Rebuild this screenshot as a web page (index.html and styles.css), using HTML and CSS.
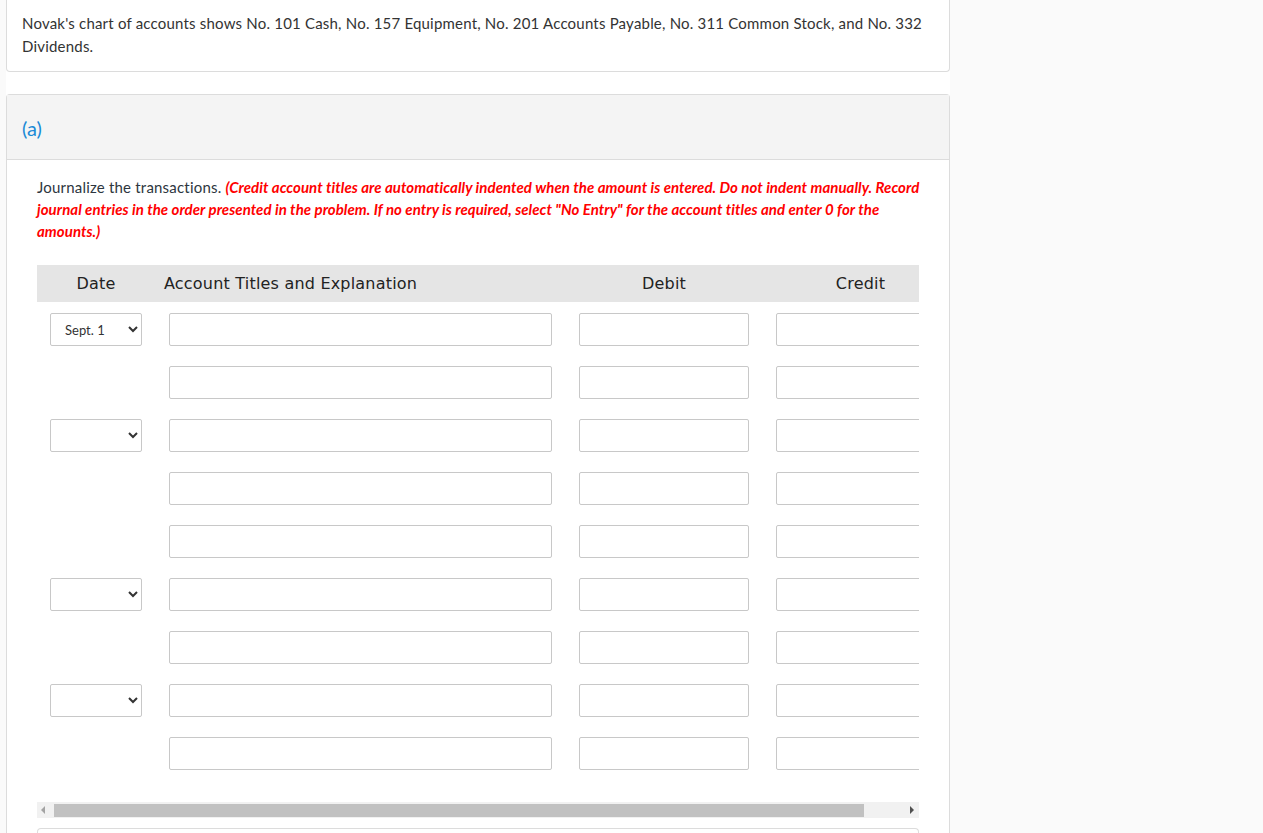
FILE: index.html
```html
<!DOCTYPE html>
<html lang="en">
<head>
    <meta charset="UTF-8">
    <title>Journal Entries</title>
    <link rel="stylesheet" href="styles.css">
</head>
<body>
    <div class="page">
        <!-- Problem statement -->
        <div class="card intro">
            Novak's chart of accounts shows No. 101 Cash, No. 157 Equipment, No. 201 Accounts Payable, No. 311 Common Stock, and No. 332 Dividends.
        </div>

        <!-- Part (a) -->
        <div class="card part">
            <div class="part-head">(a)</div>
            <div class="part-body">
                <p class="instructions">Journalize the transactions. <em class="note">(Credit account titles are automatically indented when the amount is entered. Do not indent manually. Record journal entries in the order presented in the problem. If no entry is required, select "No Entry" for the account titles and enter 0 for the amounts.)</em></p>

                <div class="table-wrap">
                    <div class="journal">
                        <div class="row head">
                            <div class="cell date">Date</div>
                            <div class="cell account">Account Titles and Explanation</div>
                            <div class="cell amount">Debit</div>
                            <div class="cell amount">Credit</div>
                        </div>
                        <div id="rows"></div>
                    </div>
                </div>

                <!-- Horizontal scrollbar -->
                <div class="scrollbar">
                    <span class="arrow left"></span>
                    <div class="thumb"></div>
                    <span class="arrow right"></span>
                </div>

                <div class="next-card"></div>
            </div>
        </div>
    </div>

    <script>
        // Filas del asiento: las que tienen objeto llevan selector de fecha
        const filas = [
            { fecha: "Sept. 1" }, null,
            { fecha: "" }, null, null,
            { fecha: "" }, null,
            { fecha: "" }, null
        ];
        const contenedor = document.getElementById('rows');

        filas.forEach(function(fila) {
            const row = document.createElement('div');
            row.className = 'row';

            let fechaHtml = '';
            if (fila) {
                fechaHtml = '<select class="date-select"><option>' + fila.fecha + '</option></select>';
            }

            row.innerHTML =
                '<div class="cell date">' + fechaHtml + '</div>' +
                '<div class="cell account"><input type="text" class="field wide"></div>' +
                '<div class="cell amount"><input type="text" class="field"></div>' +
                '<div class="cell amount"><input type="text" class="field"></div>';
            contenedor.appendChild(row);
        });
    </script>
</body>
</html>
```

FILE: styles.css
```css
body {
    margin: 0;
    background-color: #fafafa;
    font-family: 'Lato', 'Open Sans', sans-serif;
    color: #333;
}
.page {
    width: 944px;
    margin-left: 6px;
    background-color: #fff;
    min-height: 833px;
}
.card {
    border: 1px solid #dcdcdc;
    border-radius: 4px;
}
.intro {
    border-top: none;
    border-radius: 0 0 4px 4px;
    padding: 12px 15px 13px;
    font-size: 15px;
    line-height: 23px;
    letter-spacing: 0.2px;
}
.part {
    margin-top: 22px;
    border-bottom: none;
}
.part-head {
    height: 64px;
    background-color: #f4f4f4;
    border-bottom: 1px solid #dcdcdc;
    padding-left: 15px;
    line-height: 66px;
    font-size: 20px;
    color: #1a8ad6;
}
.part-body {
    padding: 16px 29px 40px 30px;
}
.instructions {
    margin: 0;
    font-size: 15px;
    line-height: 22px;
    color: #2d3640;
    letter-spacing: 0.2px;
}
.note {
    color: #ff0000;
    font-weight: bold;
    letter-spacing: 0.05px;
}

/* Tabla del asiento */
.table-wrap {
    margin-top: 23px;
    width: 882px;
    overflow: hidden;
}
.journal {
    width: 922px;
}
.row {
    display: grid;
    grid-template-columns: 118px 411px 196px 197px;
    padding: 11px 0 9px;
}
.cell.date {
    padding-left: 13px;
    text-align: center;
    height: 33px;
}
.cell.account {
    padding-left: 14px;
}
.cell.amount {
    padding-left: 13px;
}
.cell.amount + .cell.amount {
    padding-left: 14px;
}

/* Cabecera */
.row.head {
    background-color: #e5e5e5;
    height: 37px;
    padding: 0;
    align-items: center;
    font-family: 'DejaVu Sans', Verdana, sans-serif;
    font-size: 16px;
    letter-spacing: 0.2px;
    color: #222;
    width: 882px;
}
.row.head .cell {
    height: auto;
    padding-left: 0;
}
.row.head .cell.account {
    padding-left: 9px;
}
.row.head .cell.amount,
.row.head .cell.amount + .cell.amount {
    padding-left: 0;
    text-align: center;
}

.field {
    display: block;
    box-sizing: border-box;
    width: 170px;
    height: 33px;
    border: 1px solid #c8c8c8;
    border-radius: 2px;
    background: #fff;
    margin: 0;
}
.field.wide {
    width: 383px;
}
.date-select {
    display: block;
    box-sizing: border-box;
    width: 92px;
    height: 33px;
    border: 1px solid #c8c8c8;
    border-radius: 2px;
    background-color: #fff;
    padding-left: 10px;
    font-family: 'Lato', sans-serif;
    font-size: 13px;
    color: #333;
}

/* Barra de desplazamiento dibujada */
.scrollbar {
    margin-top: 23px;
    width: 882px;
    height: 16px;
    background-color: #f1f1f1;
    display: flex;
    align-items: center;
}
.thumb {
    margin-left: 9px;
    width: 810px;
    height: 13px;
    background-color: #c1c1c1;
}
.arrow {
    width: 0;
    height: 0;
    border-top: 4px solid transparent;
    border-bottom: 4px solid transparent;
}
.arrow.left {
    margin-left: 4px;
    border-right: 4px solid #a3a3a3;
}
.arrow.right {
    margin-left: 46px;
    border-left: 4px solid #505050;
}
.next-card {
    margin-top: 10px;
    width: 880px;
    height: 10px;
    border: 1px solid #dcdcdc;
    border-bottom: none;
    border-radius: 4px 4px 0 0;
}
```
